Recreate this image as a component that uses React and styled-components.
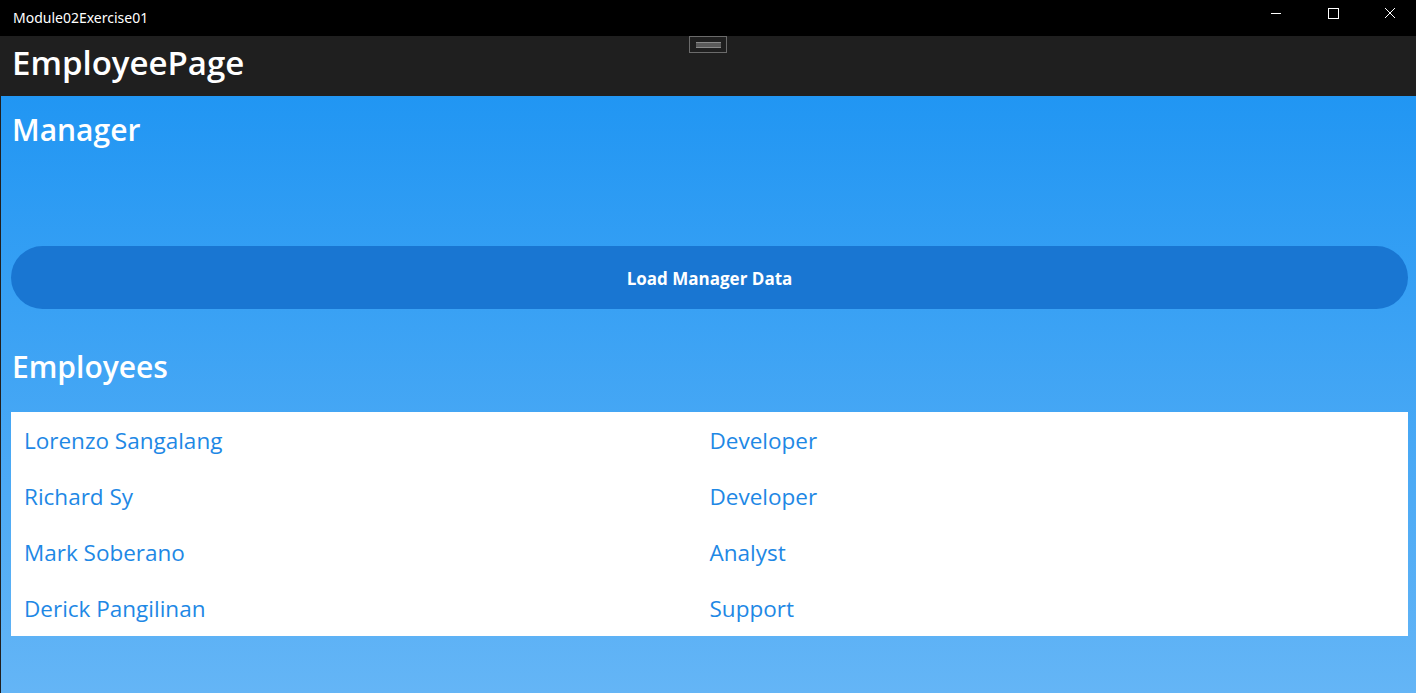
import React from "react";
import styled, { createGlobalStyle } from "styled-components";

const Global = createGlobalStyle`
  html, body { margin: 0; padding: 0; height: 100%; background: #000; }
  #root { height: 100%; }
  * { box-sizing: border-box; }
`;

const Window = styled.div`
  width: 1416px;
  height: 693px;
  display: flex;
  flex-direction: column;
  overflow: hidden;
  background: #1f1f1f;
`;

const TitleBar = styled.div`
  height: 36px;
  flex: none;
  background: #000;
  display: flex;
  align-items: center;
  padding-left: 13px;
  color: #fff;
  font-family: "Noto Sans", "Open Sans", sans-serif;
  font-size: 14px;
`;

const TitleText = styled.div`
  flex: 1;
  margin-top: -2px;
`;

const Controls = styled.div`
  display: flex;
  height: 100%;
`;

const ControlButton = styled.div`
  width: 57px;
  height: 100%;
  display: flex;
  align-items: center;
  justify-content: center;
  padding-left: 4px;
  margin-top: -5px;
`;

const NavBar = styled.div`
  height: 60px;
  flex: none;
  position: relative;
  display: flex;
  align-items: center;
  padding-left: 12px;
  background: #1f1f1f;
`;

const NavTitle = styled.h1`
  margin: 0;
  color: #fff;
  font-family: "Open Sans", sans-serif;
  font-weight: 600;
  font-size: 33px;
  margin-top: -7px;
`;

const DragHandle = styled.div`
  position: absolute;
  left: 689px;
  top: 0;
  width: 38px;
  height: 17px;
  border: 1px solid #6b6b6b;
  display: flex;
  align-items: center;
  justify-content: center;
  &::after {
    content: "";
    width: 25px;
    height: 4px;
    border-top: 1px solid #8a8a8a;
    border-bottom: 1px solid #8a8a8a;
    background: #5a5a5a;
  }
`;

const Content = styled.main`
  flex: 1;
  margin-left: 1px;
  background: linear-gradient(180deg, #2196f3 0%, #64b5f6 100%);
  padding: 13px 8px 0 10px;
  display: flex;
  flex-direction: column;
  font-family: "Open Sans", sans-serif;
`;

const SectionTitle = styled.h2`
  margin: 0;
  color: #fff;
  font-weight: 600;
  font-size: 30px;
  line-height: 42px;
  padding-left: 1px;
`;

const ManagerInfo = styled.div`
  height: 95px;
`;

const LoadButton = styled.button`
  height: 63px;
  border: none;
  border-radius: 32px;
  background: #1976d2;
  color: #fff;
  font-family: "Open Sans", sans-serif;
  font-weight: 700;
  font-size: 17px;
  padding-top: 2px;
  cursor: pointer;
  margin-bottom: 37px;
`;

const List = styled.div`
  background: #fff;
  margin-top: 24px;
  padding: 0;
`;

const Row = styled.div`
  display: grid;
  grid-template-columns: 1fr 1fr;
  height: 56px;
  align-items: center;
  padding: 0 13px;
  color: #1e88e5;
  font-size: 22.5px;
`;

const Cell = styled.div`
  margin-top: 0;
`;

const employees = [
  ["Lorenzo Sangalang", "Developer"],
  ["Richard Sy", "Developer"],
  ["Mark Soberano", "Analyst"],
  ["Derick Pangilinan", "Support"],
];

export default function App() {
  return (
    <>
      <Global />
      <Window>
        <TitleBar>
          <TitleText>Module02Exercise01</TitleText>
          <Controls>
            <ControlButton>
              <svg width="12" height="12" viewBox="0 0 12 12">
                <line x1="1" y1="6.5" x2="11" y2="6.5" stroke="#fff" strokeWidth="1" />
              </svg>
            </ControlButton>
            <ControlButton>
              <svg width="12" height="12" viewBox="0 0 12 12">
                <rect x="1.5" y="1.5" width="10" height="10" fill="none" stroke="#fff" strokeWidth="1" />
              </svg>
            </ControlButton>
            <ControlButton>
              <svg width="12" height="12" viewBox="0 0 12 12">
                <path d="M1 1 L11 11 M11 1 L1 11" stroke="#fff" strokeWidth="1" />
              </svg>
            </ControlButton>
          </Controls>
        </TitleBar>
        <NavBar>
          <NavTitle>EmployeePage</NavTitle>
          <DragHandle />
        </NavBar>
        <Content>
          <SectionTitle>Manager</SectionTitle>
          <ManagerInfo />
          <LoadButton>Load Manager Data</LoadButton>
          <SectionTitle>Employees</SectionTitle>
          <List>
            {employees.map(([name, role]) => (
              <Row key={name}>
                <Cell>{name}</Cell>
                <Cell>{role}</Cell>
              </Row>
            ))}
          </List>
        </Content>
      </Window>
    </>
  );
}
